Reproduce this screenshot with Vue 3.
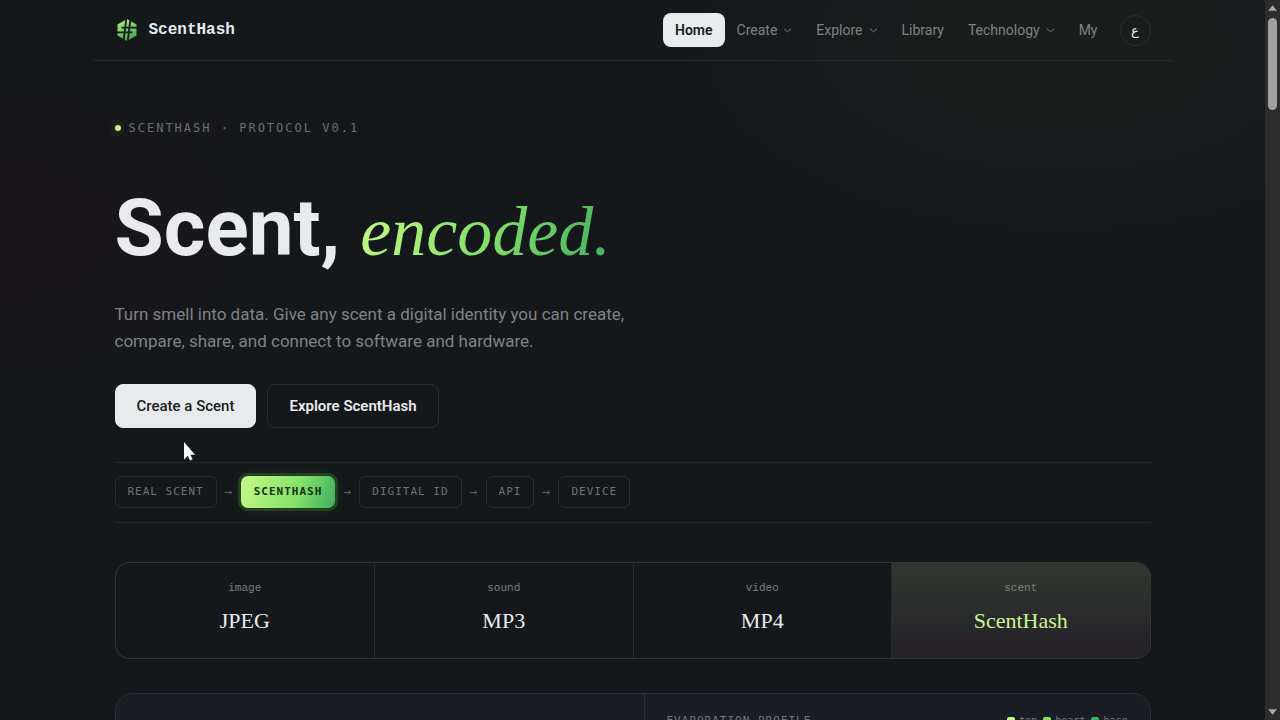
<script setup>
const links = [
  { label: 'Home', active: true },
  { label: 'Create', menu: true },
  { label: 'Explore', menu: true },
  { label: 'Library' },
  { label: 'Technology', menu: true },
  { label: 'My' },
]
const steps = ['Real scent', 'ScentHash', 'Digital ID', 'API', 'Device']
const formats = [
  { kind: 'image', name: 'JPEG' },
  { kind: 'sound', name: 'MP3' },
  { kind: 'video', name: 'MP4' },
  { kind: 'scent', name: 'ScentHash', own: true },
]
const notes = ['top', 'heart', 'base']
</script>

<template>
  <div class="window">
    <div class="page">
      <header class="bar">
        <a class="brand" href="#">
          <svg class="logo" viewBox="0 0 24 24" aria-hidden="true">
            <defs>
              <linearGradient id="leaf" x1="0" y1="0" x2="0.4" y2="1">
                <stop offset="0" stop-color="#b8f07c" />
                <stop offset="1" stop-color="#46b04f" />
              </linearGradient>
            </defs>
            <path d="M12 1 21.5 6.5v11L12 23 2.500 17.500v-11z" fill="url(#leaf)" />
            <path
              d="M11.400 0 8.400 24M15.600 0 12.600 24M6.500 9.700H22M2 14.300H17.500"
              stroke="#14181a"
              stroke-width="1.800"
              fill="none"
            />
          </svg>
          <span>ScentHash</span>
        </a>
        <nav class="links" aria-label="Main">
          <a v-for="l in links" :key="l.label" href="#" class="link" :class="{ active: l.active }">
            {{ l.label }}
            <svg v-if="l.menu" class="chev" viewBox="0 0 10 10" aria-hidden="true">
              <path d="M1 3 5 6.500 9 3" fill="none" stroke="currentColor" stroke-width="1" />
            </svg>
          </a>
          <button class="lang" type="button" lang="ar">ع</button>
        </nav>
      </header>

      <main class="content">
        <p class="eyebrow"><i class="dot"></i>ScentHash · Protocol v0.1</p>
        <h1 class="title">Scent, <em>encoded.</em></h1>
        <p class="lead">
          Turn smell into data. Give any scent a digital identity you can create,<br />
          compare, share, and connect to software and hardware.
        </p>
        <div class="actions">
          <button class="btn primary" type="button">Create a Scent</button>
          <button class="btn" type="button">Explore ScentHash</button>
        </div>

        <div class="flow">
          <template v-for="(s, i) in steps" :key="s">
            <span v-if="i" class="arrow">→</span>
            <span class="chip" :class="{ lit: i === 1 }">{{ s }}</span>
          </template>
        </div>

        <section class="formats">
          <div v-for="f in formats" :key="f.kind" class="format" :class="{ own: f.own }">
            <span class="kind">{{ f.kind }}</span>
            <span class="name">{{ f.name }}</span>
          </div>
        </section>

        <section class="panel">
          <div class="side"></div>
          <div class="profile">
            <span class="heading">Evaporation profile</span>
            <span class="legend">
              <span v-for="n in notes" :key="n" class="note"><i :class="n"></i>{{ n }}</span>
            </span>
          </div>
        </section>
      </main>
    </div>

    <div class="scroll" aria-hidden="true">
      <svg viewBox="0 0 10 6"><path d="M5 0 10 6H0z" fill="#a8a8a8" /></svg>
      <div class="thumb"></div>
      <svg viewBox="0 0 10 6"><path d="M0 0H10L5 6z" fill="#a8a8a8" /></svg>
    </div>

    <svg class="cursor" viewBox="0 0 12 19" aria-hidden="true">
      <path d="M1 0v17.500l3.800-3.800 2.200 4.800 2.600-1.200-2.200-4.600h4.600z" fill="#fff" />
    </svg>
  </div>
</template>

<style>
body {
  overflow: hidden;
  background: #14181a;
}
</style>

<style scoped>
.window {
  position: relative;
  display: flex;
  height: 100vh;
  overflow: hidden;
  font-family: Roboto, 'Noto Sans', sans-serif;
  color: #e8eaee;
}
.page {
  flex: 1;
  min-width: 0;
  overflow: hidden;
  background:
    radial-gradient(ellipse 420px 220px at 84% 6%, rgba(30, 35, 29, 0.6), transparent),
    radial-gradient(ellipse 380px 220px at 0 32%, rgba(30, 20, 27, 0.6), transparent),
    #14181b;
}
.bar,
.content {
  box-sizing: border-box;
  max-width: 1080px;
  margin: 0 auto;
  padding: 0 22px;
}
.bar {
  display: flex;
  align-items: center;
  justify-content: space-between;
  height: 61px;
  border-bottom: 1px solid #24292b;
}
.brand {
  display: flex;
  align-items: center;
  gap: 10px;
  font: bold 16px 'Liberation Mono', monospace;
  color: #e8eaee;
  text-decoration: none;
}
.logo {
  width: 24px;
  height: 24px;
}
.links {
  display: flex;
  align-items: center;
}
.link {
  display: flex;
  align-items: center;
  gap: 6px;
  height: 34px;
  padding: 0 12px;
  border-radius: 8px;
  font-size: 14px;
  color: #7f8385;
  text-decoration: none;
}
.link.active {
  background: #e8ebee;
  font-weight: 600;
  color: #16191c;
}
.chev {
  width: 9px;
  height: 9px;
}
.lang {
  width: 31px;
  height: 31px;
  margin-left: 10px;
  padding: 0;
  border: 1px solid #2a302f;
  border-radius: 50%;
  background: transparent;
  font: 13px 'DejaVu Sans', sans-serif;
  color: #e8eaee;
}
.eyebrow {
  display: flex;
  align-items: center;
  gap: 8px;
  margin: 59px 0 0;
  font: 12px/16px 'DejaVu Sans Mono', monospace;
  letter-spacing: 2px;
  text-transform: uppercase;
  color: #6c7072;
}
.dot {
  width: 6px;
  height: 6px;
  border-radius: 50%;
  background: #c3f57f;
  box-shadow: 0 0 10px rgba(132, 224, 90, 0.4);
}
.title {
  margin: 44px 0 0;
  font-size: 80px;
  line-height: 96px;
  font-weight: 700;
}
.title em {
  font: italic 400 70px 'Liberation Serif', serif;
  background: linear-gradient(110deg, #c6fa85, #84e169 50%, #3fae60);
  -webkit-background-clip: text;
  background-clip: text;
  color: transparent;
}
.lead {
  margin: 25px 0 0;
  font-size: 17px;
  line-height: 27px;
  color: #7f8386;
}
.actions {
  display: flex;
  gap: 11px;
  margin-top: 29px;
}
.btn {
  height: 44px;
  padding: 0 21px;
  border: 1px solid #282d2f;
  border-radius: 8px;
  background: transparent;
  font: 600 15px Roboto, sans-serif;
  color: #e8eaee;
}
.btn.primary {
  border-color: #e8ebee;
  background: #e8ebee;
  font-weight: 500;
  color: #1a1d20;
}
.flow {
  display: flex;
  align-items: center;
  gap: 8px;
  margin-top: 34px;
  padding: 13px 0 14px;
  border-top: 1px solid #23282a;
  border-bottom: 1px solid #23282a;
  font: 11px/30px 'DejaVu Sans Mono', monospace;
  text-transform: uppercase;
  color: #6f7375;
}
.chip {
  padding: 0 12px;
  border: 1px solid #282d2f;
  border-radius: 7px;
  letter-spacing: 1px;
}
.chip.lit {
  border-color: transparent;
  background: linear-gradient(110deg, #c6fa85, #84e169 60%, #3fae60) border-box;
  box-shadow: 0 0 0 3px #24401f, 0 0 12px rgba(80, 160, 50, 0.2);
  font-weight: 700;
  color: #143010;
}
.arrow {
  width: 8px;
  font-size: 13px;
  text-align: center;
  color: #5c6163;
}
.formats {
  display: grid;
  grid-template-columns: repeat(4, 1fr);
  margin-top: 39px;
  border: 1px solid #303537;
  border-radius: 14px;
  overflow: hidden;
}
.format {
  display: flex;
  flex-direction: column;
  align-items: center;
  gap: 10px;
  padding: 17px 0 22px;
  border-left: 1px solid #272c2e;
}
.format:first-child {
  border-left: 0;
}
.format.own {
  background: linear-gradient(#31392f, #262329 85%);
}
.kind {
  font: 11px/16px 'Liberation Mono', monospace;
  color: #7b7f80;
}
.name {
  font: 22px/30px 'Liberation Serif', serif;
}
.own .name {
  color: #cdf58e;
}
.panel {
  display: grid;
  grid-template-columns: 528px 1fr;
  min-height: 300px;
  margin-top: 34px;
  border: 1px solid #2b3033;
  border-radius: 18px;
  background: #1a1d23;
}
.profile {
  display: flex;
  align-items: flex-start;
  justify-content: space-between;
  padding: 19px 22px;
  border-left: 1px solid #2b3033;
  font: 11px/16px 'DejaVu Sans Mono', monospace;
  color: #74787a;
}
.heading {
  letter-spacing: 1px;
  text-transform: uppercase;
}
.legend {
  display: flex;
  gap: 6px;
  font-size: 10px;
}
.note {
  display: flex;
  align-items: center;
  gap: 4px;
}
.note i {
  width: 8px;
  height: 8px;
  border-radius: 2px;
}
.top {
  background: #c6fa85;
}
.heart {
  background: #84e169;
}
.base {
  background: #3fae60;
}
.scroll {
  box-sizing: border-box;
  display: flex;
  flex-direction: column;
  align-items: center;
  width: 15px;
  padding: 5px 0;
  background: #2c2c2c;
}
.scroll svg {
  width: 9px;
  height: 6px;
}
.thumb {
  width: 9px;
  height: 92px;
  margin: 7px 0 auto;
  border-radius: 5px;
  background: #a0a0a0;
}
.cursor {
  position: absolute;
  left: 183px;
  top: 442px;
  width: 12px;
  height: 19px;
}
</style>
